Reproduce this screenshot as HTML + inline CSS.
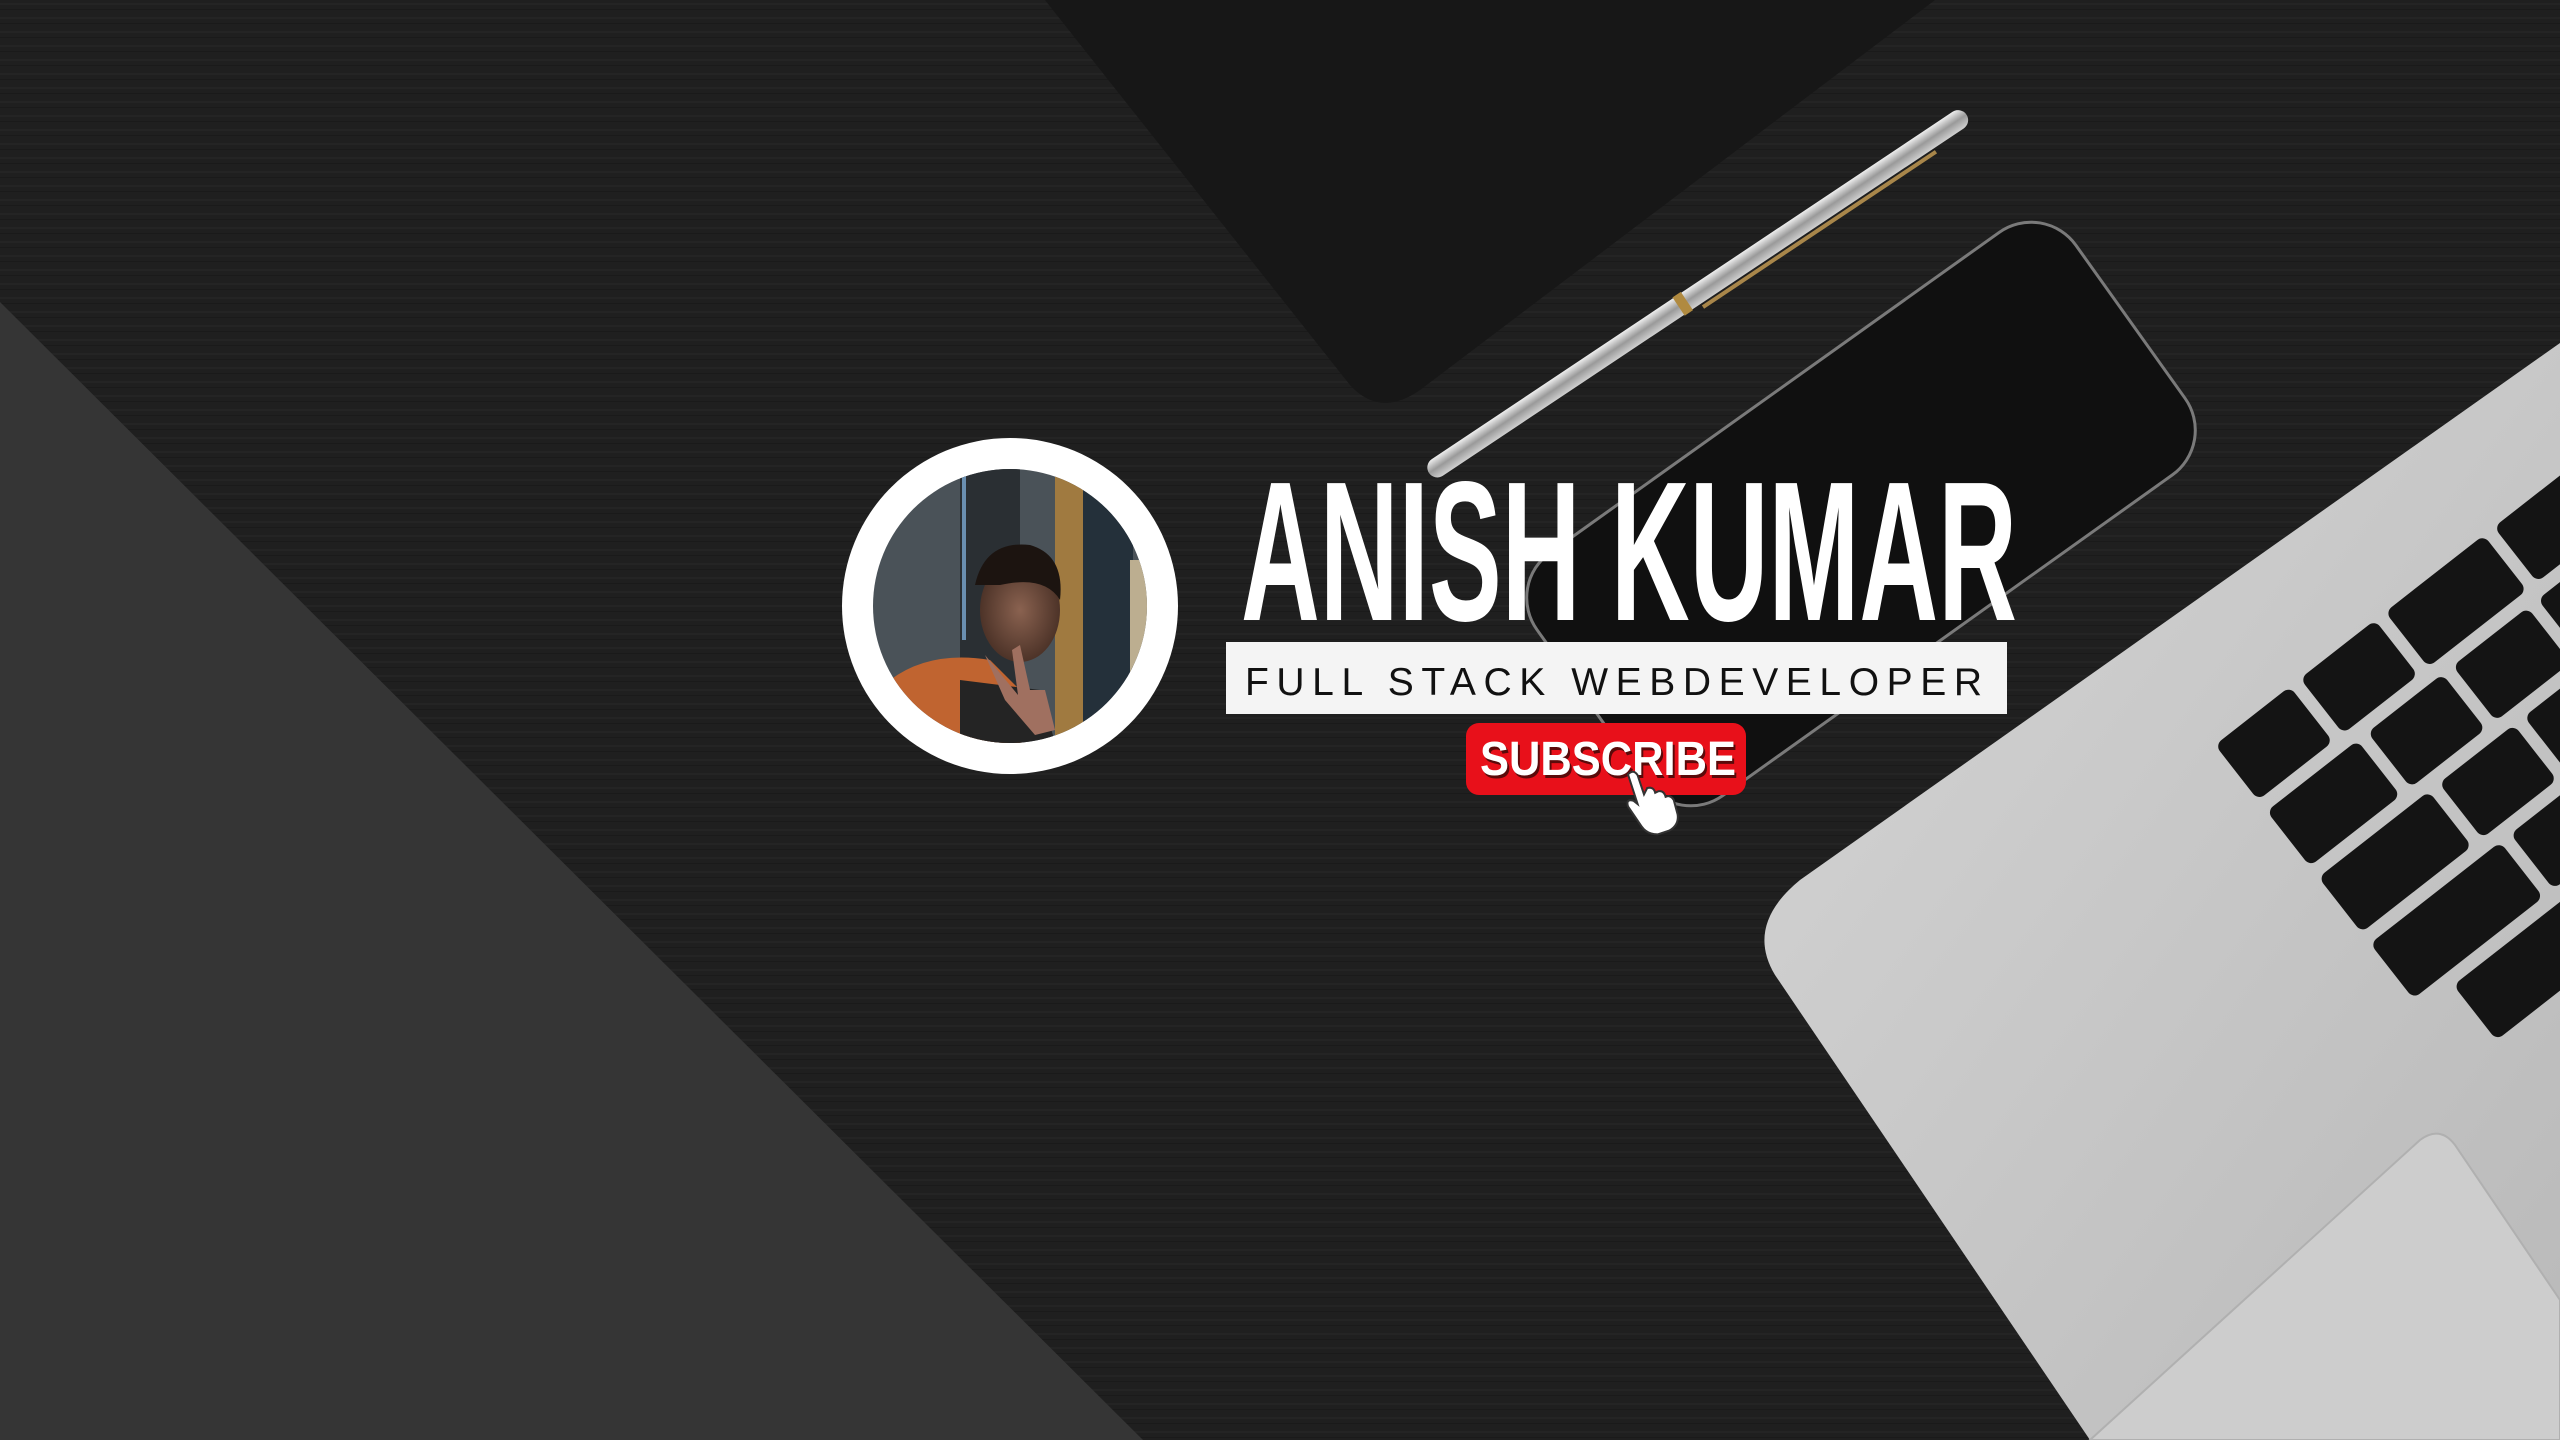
<!DOCTYPE html>
<html><head><meta charset="utf-8"><style>
html,body{margin:0;padding:0;width:2560px;height:1440px;overflow:hidden;background:#1f1f1f}
svg{display:block}
</style></head><body>
<svg width="2560" height="1440" viewBox="0 0 2560 1440" xmlns="http://www.w3.org/2000/svg">
<defs>
<pattern id="grain" width="2560" height="14" patternUnits="userSpaceOnUse">
<rect width="2560" height="14" fill="#1f1f1f"/>
<rect y="3" width="2560" height="2" fill="#242424"/>
<rect y="9" width="2560" height="1" fill="#1a1a1a"/>
</pattern>
<linearGradient id="lap" x1="0" y1="0" x2="1" y2="1">
<stop offset="0" stop-color="#d6d6d6"/><stop offset="1" stop-color="#b9b9b9"/></linearGradient>
<linearGradient id="pen" x1="0" y1="0" x2="0" y2="1">
<stop offset="0" stop-color="#eeeeee"/><stop offset="0.5" stop-color="#9a9a9a"/><stop offset="1" stop-color="#d0d0d0"/></linearGradient>
<clipPath id="av"><circle cx="1010" cy="606" r="137"/></clipPath>
<radialGradient id="face" cx="0.5" cy="0.5" r="0.5">
<stop offset="0" stop-color="#8a6250"/><stop offset="1" stop-color="#4d3328"/></radialGradient>
</defs>
<rect width="2560" height="1440" fill="url(#grain)"/>
<!-- notebook -->
<path d="M1045 0 L1935 0 L1420 390 Q1380 418 1350 385 Z" fill="#171717"/>
<!-- gray triangle -->
<polygon points="0,302 1143,1440 0,1440" fill="#353535"/>
<!-- phone -->
<g transform="translate(1861,514) rotate(-35.5)">
<rect x="-331" y="-149" width="662" height="298" rx="55" fill="#101010" stroke="#7a7a7a" stroke-width="3"/>
</g>
<!-- pen -->
<g transform="translate(1429,473) rotate(-33.7)">
<rect x="0" y="-10" width="646" height="20" rx="10" fill="url(#pen)"/>
<rect x="300" y="-11" width="10" height="22" fill="#b08a40"/>
<line x1="320" y1="14" x2="600" y2="14" stroke="#a8864a" stroke-width="4"/>
</g>
<!-- laptop -->
<path d="M2560 343 L1800 880 Q1745 925 1775 975 L2090 1440 L2560 1440 Z" fill="url(#lap)"/>
<g transform="translate(2215,745) rotate(-38)" fill="#141414">
<rect x="0" y="0" width="95" height="70" rx="8"/>
<rect x="108" y="0" width="95" height="70" rx="8"/>
<rect x="216" y="0" width="125" height="70" rx="8"/>
<rect x="354" y="0" width="105" height="70" rx="8"/>
<rect x="472" y="0" width="105" height="70" rx="8"/>
<rect x="0" y="84" width="115" height="70" rx="8"/>
<rect x="128" y="84" width="95" height="70" rx="8"/>
<rect x="236" y="84" width="95" height="70" rx="8"/>
<rect x="344" y="84" width="95" height="70" rx="8"/>
<rect x="452" y="84" width="95" height="70" rx="8"/>
<rect x="0" y="168" width="140" height="70" rx="8"/>
<rect x="153" y="168" width="95" height="70" rx="8"/>
<rect x="261" y="168" width="95" height="70" rx="8"/>
<rect x="369" y="168" width="95" height="70" rx="8"/>
<rect x="0" y="252" width="165" height="70" rx="8"/>
<rect x="178" y="252" width="95" height="70" rx="8"/>
<rect x="286" y="252" width="95" height="70" rx="8"/>
<rect x="40" y="336" width="200" height="70" rx="8"/>
<rect x="253" y="336" width="200" height="70" rx="8"/>
</g>
<path d="M2090 1440 L2420 1140 Q2440 1125 2455 1145 L2560 1300 L2560 1440 Z" fill="#cdcdcd" stroke="#b0b0b0" stroke-width="2"/>
<!-- avatar -->
<circle cx="1010" cy="606" r="168" fill="#fff"/>
<g clip-path="url(#av)">
<rect x="870" y="465" width="280" height="285" fill="#4a5258"/>
<rect x="960" y="465" width="60" height="285" fill="#2a2f33"/>
<rect x="1055" y="470" width="28" height="280" fill="#a07a40"/>
<rect x="1083" y="470" width="50" height="280" fill="#24303a"/>
<rect x="1130" y="560" width="25" height="180" fill="#bcae90"/>
<rect x="962" y="470" width="4" height="170" fill="#6a8fb0"/>
<path d="M890 680 Q930 650 990 660 L1030 700 L1020 760 L880 760 Z" fill="#c06430"/>
<path d="M960 680 L1040 690 L1060 760 L960 760 Z" fill="#242424"/>
<ellipse cx="1020" cy="610" rx="40" ry="52" fill="url(#face)"/>
<path d="M975 585 Q985 540 1030 545 Q1065 555 1060 600 Q1045 575 1000 585 Z" fill="#1c1410"/>
<path d="M985 655 L1005 700 L1035 735 L1055 730 L1045 690 L1030 690 L1020 645 L1012 650 L1018 695 Z" fill="#a07060"/>
</g>
<!-- name -->
<text x="1241" y="620" textLength="776" lengthAdjust="spacingAndGlyphs" font-family="'Liberation Sans Narrow','Liberation Sans',sans-serif" font-weight="bold" font-size="199" fill="#fff">ANISH KUMAR</text>
<rect x="1226" y="642" width="781" height="72" fill="#f4f4f4"/>
<text x="1245" y="695" textLength="737" lengthAdjust="spacing" font-family="'Liberation Sans Narrow','Liberation Sans',sans-serif" font-size="39" fill="#111">FULL STACK WEBDEVELOPER</text>
<!-- subscribe -->
<rect x="1466" y="723" width="280" height="72" rx="13" fill="#e8101a"/>
<text x="1482" y="778" textLength="256" lengthAdjust="spacingAndGlyphs" font-family="'Liberation Sans Narrow','Liberation Sans',sans-serif" font-weight="bold" font-size="48" fill="#5a0a0a">SUBSCRIBE</text>
<text x="1480" y="775" textLength="256" lengthAdjust="spacingAndGlyphs" font-family="'Liberation Sans Narrow','Liberation Sans',sans-serif" font-weight="bold" font-size="48" fill="#fff">SUBSCRIBE</text>
<!-- hand cursor -->
<g transform="translate(1628,772) scale(0.8)">
<path d="M0 3 Q7 -4 12 4 L20 28 L24 20 Q32 18 34 26 L38 24 Q45 23 47 31 L50 30 Q57 31 58 38 L62 53 Q64 66 52 73 L37 78 Q24 78 17 68 L0 43 Q-3 33 7 36 L12 40 Z" fill="#fff" stroke="#333" stroke-width="2.5"/>
</g>
</svg>
</body></html>
